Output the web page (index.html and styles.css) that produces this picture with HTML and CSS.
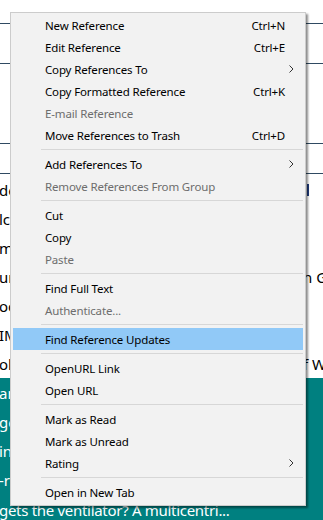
FILE: index.html
```html
<!DOCTYPE html>
<html lang="en">
<head>
    <meta charset="UTF-8">
    <meta name="viewport" content="width=device-width, initial-scale=1.0">
    <title>References</title>
    <link rel="stylesheet" href="styles.css">
</head>
<body>

<div class="app">
    <div class="bar bar-top"></div>
    <div class="bar bar-tools"></div>
    <div class="bar bar-group"></div>
    <div class="bar bar-head"></div>

    <div class="list">
        <div class="ref"><span class="title">des</span><span class="side"><span class="mark"></span></span></div>
        <div class="ref"><span class="title">lco</span><span class="side"></span></div>
        <div class="ref"><span class="title">mo</span><span class="side"></span></div>
        <div class="ref"><span class="title">ur</span><span class="side">n Gr</span></div>
        <div class="ref"><span class="title">oc</span><span class="side"></span></div>
        <div class="ref"><span class="title">IM</span><span class="side"></span></div>
        <div class="ref"><span class="title">ol</span><span class="side">f W</span></div>
        <div class="ref selected"><span class="title">an</span><span class="side"></span></div>
        <div class="ref selected"><span class="title">ge</span><span class="side"></span></div>
        <div class="ref selected"><span class="title">in</span><span class="side"></span></div>
        <div class="ref selected"><span class="title">-r</span><span class="side"></span></div>
        <div class="ref selected"><span class="title last">gets the ventilator? A multicentri...</span><span class="side"></span></div>
    </div>
</div>

<div class="menu">
    <div class="item"><span>New Reference</span><span class="key">Ctrl+N</span><span></span></div>
    <div class="item"><span>Edit Reference</span><span class="key">Ctrl+E</span><span></span></div>
    <div class="item"><span>Copy References To</span><span class="key"></span><span class="arrow"><svg width="5" height="8" viewBox="0 0 5 8"><polyline points="0.5,0.5 4,4 0.5,7.5" fill="none" stroke="#333" stroke-width="1"/></svg></span></div>
    <div class="item"><span>Copy Formatted Reference</span><span class="key">Ctrl+K</span><span></span></div>
    <div class="item disabled"><span>E-mail Reference</span><span class="key"></span><span></span></div>
    <div class="item"><span>Move References to Trash</span><span class="key">Ctrl+D</span><span></span></div>
    <div class="sep"></div>
    <div class="item"><span>Add References To</span><span class="key"></span><span class="arrow"><svg width="5" height="8" viewBox="0 0 5 8"><polyline points="0.5,0.5 4,4 0.5,7.5" fill="none" stroke="#333" stroke-width="1"/></svg></span></div>
    <div class="item disabled"><span>Remove References From Group</span><span class="key"></span><span></span></div>
    <div class="sep"></div>
    <div class="item"><span>Cut</span><span class="key"></span><span></span></div>
    <div class="item"><span>Copy</span><span class="key"></span><span></span></div>
    <div class="item disabled"><span>Paste</span><span class="key"></span><span></span></div>
    <div class="sep"></div>
    <div class="item"><span>Find Full Text</span><span class="key"></span><span></span></div>
    <div class="item disabled"><span>Authenticate...</span><span class="key"></span><span></span></div>
    <div class="sep"></div>
    <div class="item active"><span>Find Reference Updates</span><span class="key"></span><span></span></div>
    <div class="sep"></div>
    <div class="item"><span>OpenURL Link</span><span class="key"></span><span></span></div>
    <div class="item"><span>Open URL</span><span class="key"></span><span></span></div>
    <div class="sep"></div>
    <div class="item"><span>Mark as Read</span><span class="key"></span><span></span></div>
    <div class="item"><span>Mark as Unread</span><span class="key"></span><span></span></div>
    <div class="item"><span>Rating</span><span class="key"></span><span class="arrow"><svg width="5" height="8" viewBox="0 0 5 8"><polyline points="0.5,0.5 4,4 0.5,7.5" fill="none" stroke="#333" stroke-width="1"/></svg></span></div>
    <div class="sep"></div>
    <div class="item"><span>Open in New Tab</span><span class="key"></span><span></span></div>
</div>

</body>
</html>
```

FILE: styles.css
```css
body {
    margin: 0;
    background-color: #fff;
    font-family: "Noto Sans", Arial, sans-serif;
    overflow: hidden;
}

.app {
    width: 323px;
    height: 520px;
    overflow: hidden;
}

.bar {
    border-bottom: 1px solid #2f4a62;
    box-sizing: border-box;
}

.bar-top {
    height: 24px;
}

.bar-tools {
    height: 40px;
}

.bar-group {
    height: 80px;
}

.bar-head {
    height: 30px;
}

.list {
    padding-top: 1px;
}

.ref {
    display: grid;
    grid-template-columns: 1fr 20px;
    height: 29px;
    align-items: center;
    font-size: 15px;
    color: #000;
    white-space: nowrap;
}

.ref.selected {
    background-color: #008080;
    color: #fff;
}

.title {
    overflow: hidden;
    margin-left: -1px;
}

.title.last {
    letter-spacing: -0.3px;
    padding-top: 2px;
}

.side {
    overflow: hidden;
    display: flex;
    align-items: center;
}

.mark {
    display: block;
    width: 2px;
    height: 12px;
    margin-left: 4px;
    background-color: #1f3a7a;
}

/* context menu */
.menu {
    position: absolute;
    left: 10px;
    top: 12px;
    width: 296px;
    box-sizing: border-box;
    background-color: #f2f2f2;
    border: 1px solid #cccccc;
    padding: 1px 2px 2px 2px;
    box-shadow: 2px 2px 2px rgba(0, 0, 0, 0.45);
    font-size: 11.5px;
    letter-spacing: -0.15px;
    color: #000;
}

.item {
    display: grid;
    grid-template-columns: 1fr auto 18px;
    align-items: center;
    height: 22px;
    padding-left: 32px;
}

.item.disabled {
    color: #6d6d6d;
}

.item.active {
    background-color: #91c9f7;
}

.key {
    text-align: right;
}

.arrow {
    display: flex;
    align-items: center;
    padding-left: 4px;
}

.sep {
    height: 1px;
    background-color: #d7d7d7;
    margin: 3px 0 3px 28px;
}
```
